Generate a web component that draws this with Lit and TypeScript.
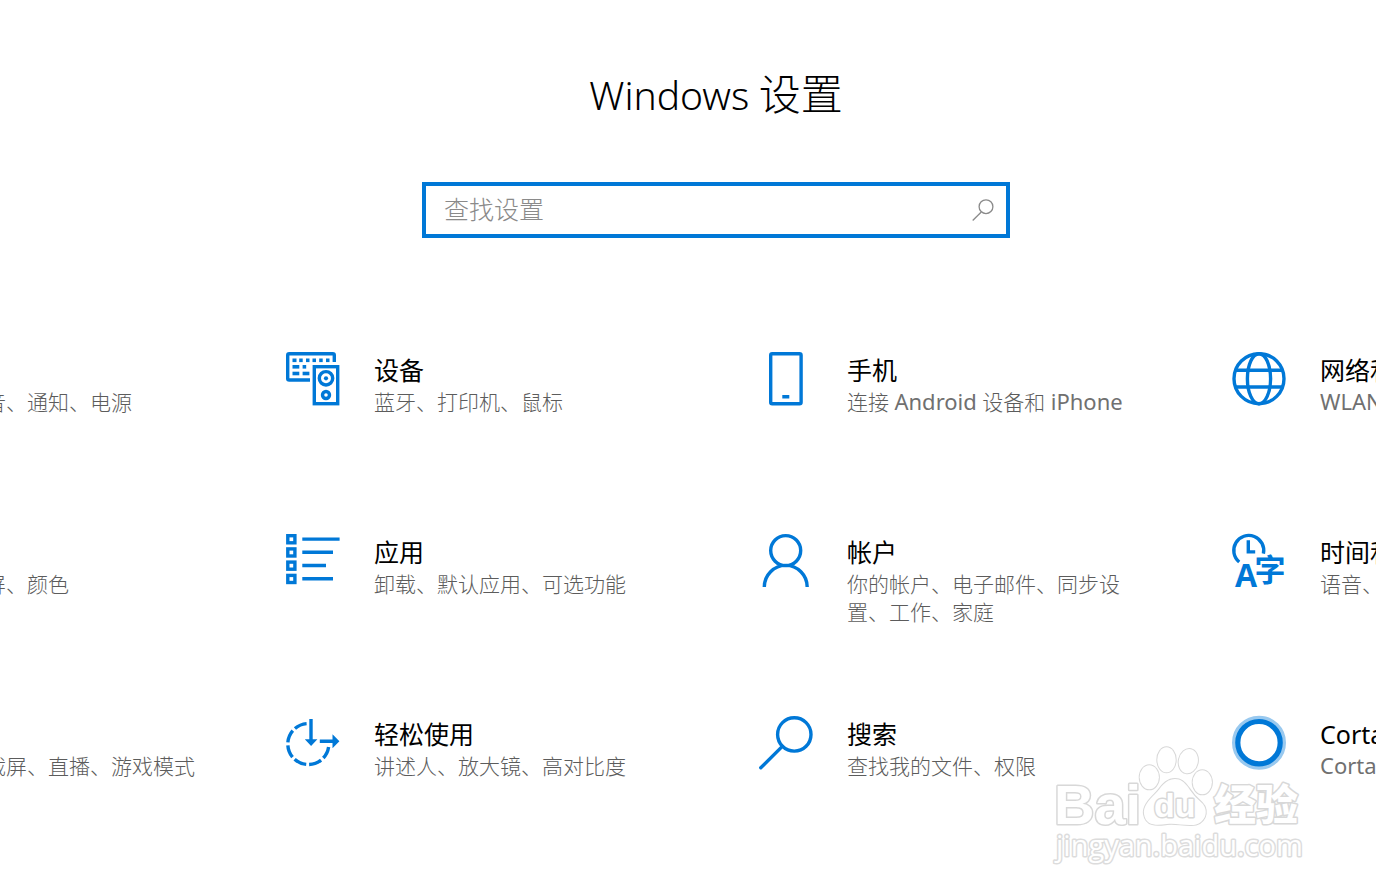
import { LitElement, html, css, svg, TemplateResult } from "lit";
import { customElement, property } from "lit/decorators.js";

type Entry = { icon: string; title: string; detail: string };

const KEYS = [
  [6.5, 6.5, 4], [13.2, 6.5, 3.5], [20, 6.5, 3.5], [26.5, 6.5, 3.5], [33.2, 6.5, 3.5], [40, 6.5, 3.5],
  [6.5, 13, 6.8], [16.6, 13, 3.6],
  [6.5, 19.7, 6.8], [16.6, 19.7, 6.8],
];

const ICONS: Record<string, TemplateResult> = {
  system: svg`<path class="line" d="M2 8H52V40H2ZM27 40V48M14 48H40"/>`,
  devices: svg`
    <path class="line" d="M24 28H3.2Q1.7 28 1.7 26.5V3.2Q1.7 1.7 3.2 1.7H46.8Q48.3 1.7 48.3 3.2V10"/>
    ${KEYS.map(([x, y, w]) => svg`<rect class="solid" x=${x} y=${y} width=${w} height="3.6"/>`)}
    <rect class="line" x="28.3" y="14.7" width="23.4" height="37"/>
    <circle class="line" cx="40" cy="26.3" r="6.7"/>
    <circle class="solid" cx="40" cy="26.3" r="2.1"/>
    <circle class="line" cx="40" cy="43" r="3.5"/>`,
  phone: svg`
    <rect class="line" x="11.7" y="1.7" width="30.4" height="50" rx="1.5"/>
    <rect class="solid" x="23.3" y="43" width="7" height="3.5"/>`,
  globe: svg`
    <circle class="line" cx="27" cy="26.7" r="25"/>
    <ellipse class="line" cx="27" cy="26.7" rx="11.6" ry="25"/>
    <path class="line" d="M4 18.3H50M4 35H50"/>`,
  brush: svg`<path class="line" d="M50 3 22 31M22 31Q10 30 10 41 8 48 2 49 24 54 24 34Z"/>`,
  apps: svg`
    ${[5.3, 18.5, 31.7, 45].map((y) => svg`<rect class="line" x="1.8" y=${y - 3.6} width="7.1" height="7.1"/>`)}
    <path class="line" d="M16.3 5.1H53.6M16.3 18.3H47M16.3 31.5H40M16.3 44.8H47"/>`,
  account: svg`
    <circle class="line" cx="26.7" cy="16.6" r="15"/>
    <path class="line" d="M5.3 53A21.4 21.6 0 0 1 48.2 53"/>`,
  language: svg`
    <path class="line" d="M7.2 28A15 15 0 1 1 31.4 19.7"/>
    <path class="line" d="M16.3 6.3V17.9H23.2"/>
    <text class="letter" x="3" y="53">A</text>
    <text class="letter han" x="22.5" y="47">字</text>`,
  game: svg`<rect class="line" x="2" y="12" width="50" height="30" rx="14"/>`,
  ease: svg`
    <path class="line dashed" d="M20.6 7.6A20.5 20.5 0 1 0 42.6 31"/>
    <path class="line" d="M25 3V24M33.8 25.2H48"/>
    <path class="solid" d="M18.8 23.2H31.4L25.1 29.9ZM46.5 18.2V32.2L53.4 25.2Z"/>`,
  search: svg`
    <circle class="line" cx="35.3" cy="18.4" r="16.7"/>
    <path class="line round" d="M23.3 30.4 1.8 51.8"/>`,
  cortana: svg`
    <circle class="halo" cx="27" cy="26.7" r="25"/>
    <circle class="ring" cx="27" cy="26.7" r="21.2"/>`,
};

const ENTRIES: Entry[] = [
  { icon: "system", title: "系统", detail: "显示、声音、通知、电源" },
  { icon: "devices", title: "设备", detail: "蓝牙、打印机、鼠标" },
  { icon: "phone", title: "手机", detail: "连接 Android 设备和 iPhone" },
  { icon: "globe", title: "网络和 Internet", detail: "WLAN、飞行模式、VPN" },
  { icon: "brush", title: "个性化", detail: "背景、锁屏、颜色" },
  { icon: "apps", title: "应用", detail: "卸载、默认应用、可选功能" },
  { icon: "account", title: "帐户", detail: "你的帐户、电子邮件、同步设置、工作、家庭" },
  { icon: "language", title: "时间和语言", detail: "语音、区域、日期" },
  { icon: "game", title: "游戏", detail: "游戏栏、截屏、直播、游戏模式" },
  { icon: "ease", title: "轻松使用", detail: "讲述人、放大镜、高对比度" },
  { icon: "search", title: "搜索", detail: "查找我的文件、权限" },
  { icon: "cortana", title: "Cortana", detail: "Cortana 语言、权限" },
];

// Latin words take the regular weight, Chinese text the light one.
const mixed = (text: string) =>
  text.split(/([A-Za-z]+)/).map((part, i) => (i % 2 ? html`<span class="latin">${part}</span>` : part));

@customElement("settings-tile")
class SettingsTile extends LitElement {
  @property({ attribute: false }) entry!: Entry;

  static styles = css`
    :host { display: block; }
    .tile {
      display: grid;
      grid-template-columns: 54px 1fr;
      column-gap: 34px;
      color: #000;
      text-decoration: none;
    }
    .icon { width: 54px; height: 54px; overflow: visible; }
    .line, .ring, .halo { fill: none; stroke: #0078d7; stroke-width: 3.4; }
    .round { stroke-linecap: round; }
    .dashed { stroke-dasharray: 12.8 3; }
    .solid { fill: #0078d7; }
    .halo { stroke: #99c9ef; stroke-width: 4; }
    .ring { stroke-width: 5.2; }
    .letter { fill: #0078d7; font: 700 32px "Open Sans", sans-serif; }
    .han { font: 700 31px "Noto Sans CJK SC", sans-serif; }
    .title { display: block; font-size: 25px; line-height: 36px; font-weight: 400; }
    .detail { display: block; font-size: 21px; line-height: 28px; color: #5c5c5c; }
    .latin { font-size: 22px; line-height: 1; font-weight: 400; color: #707070; }
  `;

  render() {
    return html`<a class="tile" href="#">
      <svg class="icon" viewBox="0 0 54 54" aria-hidden="true">${ICONS[this.entry.icon]}</svg>
      <span>
        <span class="title">${this.entry.title}</span>
        <span class="detail">${mixed(this.entry.detail)}</span>
      </span>
    </a>`;
  }
}

@customElement("baidu-mark")
class BaiduMark extends LitElement {
  static styles = css`
    :host { display: block; }
    .mark { display: block; width: 252px; height: 124px; overflow: visible; }
    .shape, .word { fill: #fff; stroke: #d8d8d8; stroke-width: 3; stroke-linejoin: round; paint-order: stroke; }
    .shape { stroke-width: 2; }
    .bai { font: 700 56px "Liberation Sans", sans-serif; }
    .du { font: 700 34px "Liberation Sans", sans-serif; }
    .han { font: 900 42px "Noto Sans CJK SC", sans-serif; }
    .site { font: 400 29px "Open Sans", sans-serif; stroke: #dcdcdc; }
  `;

  render() {
    return html`<svg class="mark" viewBox="0 0 252 124" role="img" aria-label="Baidu 经验">
      <text class="word bai" x="2" y="80">Bai</text>
      <ellipse class="shape" cx="97.3" cy="33.3" rx="9.6" ry="12"/>
      <ellipse class="shape" cx="114.5" cy="15.8" rx="9.2" ry="12.5"/>
      <ellipse class="shape" cx="136.3" cy="17.2" rx="9.5" ry="12.2" transform="rotate(12 136.3 17.2)"/>
      <ellipse class="shape" cx="150.3" cy="38.3" rx="9.6" ry="12"/>
      <path class="shape" d="M123 35C113 35 109 44 103 50C96 57 91 63 92 70C94 83 106 81 115 80C123 79 129 81 138 81C153 82 158 67 150 59C143 53 140 49 136 43C132 38 129 35 123 35Z"/>
      <text class="word du" x="102" y="73">du</text>
      <text class="word han" x="162" y="76">经验</text>
      <text class="word site" x="4" y="112">jingyan.baidu.com</text>
    </svg>`;
  }
}

@customElement("app-root")
class AppRoot extends LitElement {
  static styles = css`
    :host {
      display: block;
      position: relative;
      min-height: 100vh;
      overflow: hidden;
      background: #fff;
      font-family: "Noto Sans", "Noto Sans CJK SC", sans-serif;
      font-weight: 300;
    }
    .page {
      display: flex;
      flex-direction: column;
      align-items: center;
      padding: 60px 0 64px 56px;
    }
    .heading {
      margin: 0 0 58px;
      font: 300 42px/64px "Noto Sans CJK SC", sans-serif;
    }
    .brand { font: 300 39px/1 "Noto Sans", sans-serif; }
    .search {
      box-sizing: border-box;
      display: flex;
      align-items: center;
      width: 588px;
      max-width: 90%;
      height: 56px;
      padding: 0 12px 0 18px;
      border: 4px solid #0078d7;
    }
    .field {
      flex: 1;
      min-width: 0;
      padding: 0 0 2px;
      border: 0;
      outline: 0;
      background: none;
      color: #000;
      font: inherit;
      font-size: 25px;
      line-height: 36px;
    }
    .field::placeholder { color: #8a8a8a; opacity: 1; }
    .go { display: block; padding: 0; border: 0; background: none; }
    .glass { display: block; width: 22px; height: 22px; fill: none; stroke: #8a8a8a; stroke-width: 1.3; }
    .grid {
      display: grid;
      grid-template-columns: repeat(4, 387px);
      grid-auto-rows: minmax(101px, auto);
      gap: 81px 86px;
      margin-top: 114px;
    }
    .watermark { position: absolute; right: 72px; bottom: 26px; pointer-events: none; }
  `;

  render() {
    return html`
      <main class="page">
        <h1 class="heading"><span class="brand">Windows</span> 设置</h1>
        <form class="search" role="search">
          <input class="field" type="text" placeholder="查找设置" aria-label="查找设置" />
          <button class="go" type="button" aria-label="搜索">
            <svg class="glass" viewBox="0 0 22 22"><circle cx="14" cy="7.7" r="6.9"/><path d="M9.3 13 .7 21.5"/></svg>
          </button>
        </form>
        <nav class="grid" aria-label="Windows 设置">
          ${ENTRIES.map((entry) => html`<settings-tile .entry=${entry}></settings-tile>`)}
        </nav>
      </main>
      <baidu-mark class="watermark"></baidu-mark>
    `;
  }
}
